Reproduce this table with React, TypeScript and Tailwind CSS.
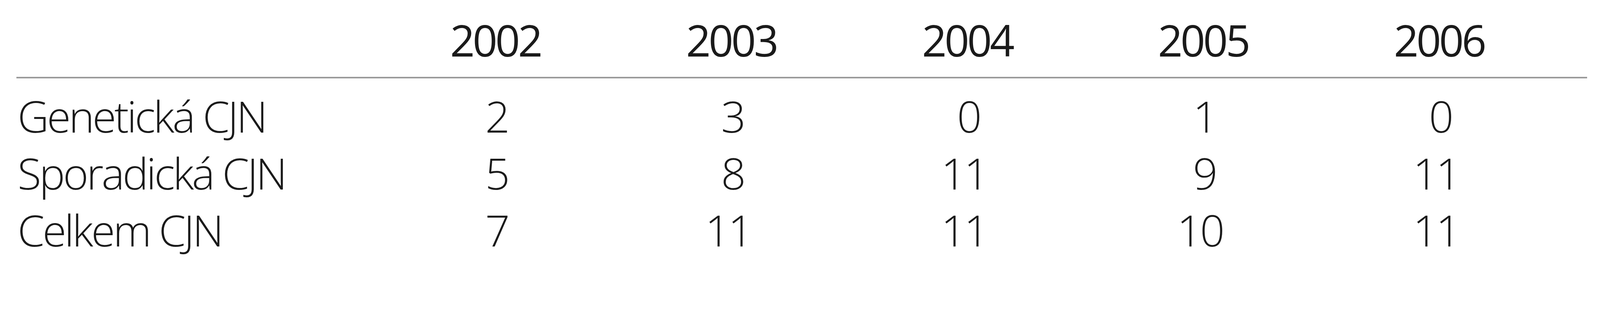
import React from 'react';

// Tabulka počtu případů CJN podle roku
const years = ['2002', '2003', '2004', '2005', '2006'];

const rows: { label: string; values: number[] }[] = [
  { label: 'Genetická CJN', values: [2, 3, 0, 1, 0] },
  { label: 'Sporadická CJN', values: [5, 8, 11, 9, 11] },
  { label: 'Celkem CJN', values: [7, 11, 11, 10, 11] },
];

export default function App() {
  return (
    <div className="w-full h-[744px] overflow-hidden bg-white text-[#1a1a1a] font-['Open_Sans',sans-serif]">
      <div className="ml-[42px] w-[4021px]">
        {/* Záhlaví s roky */}
        <div className="grid grid-cols-[924px_repeat(5,604px)] pt-[47px] pb-[39px] border-b-4 border-[#9a9a9a]">
          <div />
          {years.map((y) => (
            <div key={y} className="text-center text-[111px] leading-none font-normal tracking-[-0.05em] tabular-nums">
              {y}
            </div>
          ))}
        </div>

        {/* Řádky s daty */}
        <div className="pt-[23px]">
          {rows.map((r) => (
            <div key={r.label} className="grid grid-cols-[924px_repeat(5,604px)] h-[146px] text-[111px] leading-[146px] font-light">
              <div className="pl-[3px] whitespace-nowrap tracking-[-0.045em]">{r.label}</div>
              {r.values.map((v, i) => (
                <div key={i} className="flex justify-center pr-[16px]">
                  <span className={`w-[118px] text-right tracking-[-0.04em] tabular-nums ${v < 10 ? 'pr-[18px]' : ''}`}>{v}</span>
                </div>
              ))}
            </div>
          ))}
        </div>
      </div>
    </div>
  );
}
